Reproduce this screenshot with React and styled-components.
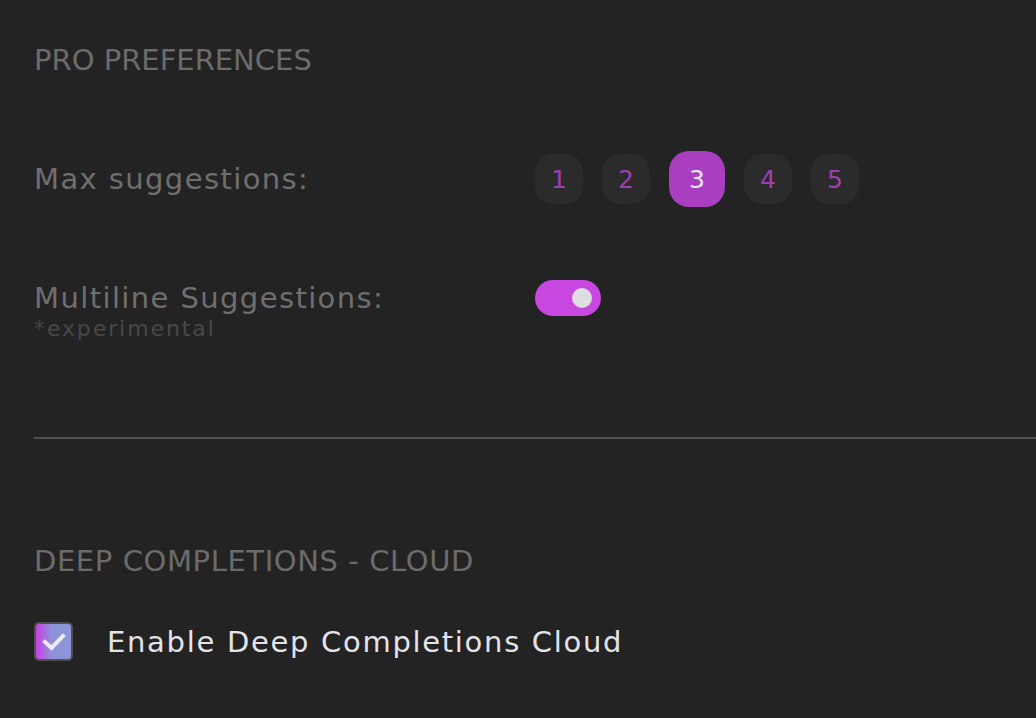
import React, { useState } from "react";
import styled, { createGlobalStyle } from "styled-components";

const FONT = `"DejaVu Sans", "Open Sans", sans-serif`;

const GlobalStyle = createGlobalStyle`
  html, body {
    margin: 0;
    padding: 0;
    background: #232323;
  }
  #root {
    min-height: 100vh;
    background: #232323;
  }
`;

const Page = styled.div`
  font-family: ${FONT};
  padding: 42px 0 0 34px;
  height: 718px;
  box-sizing: border-box;
  overflow: hidden;
`;

const SectionTitle = styled.h2`
  margin: 0;
  margin-top: ${(p) => p.$mt || 0}px;
  font-size: 29px;
  line-height: 36px;
  font-weight: 400;
  letter-spacing: ${(p) => p.$ls || 0}px;
  color: #6b6b6b;
  text-transform: uppercase;
`;

const Row = styled.div`
  display: grid;
  grid-template-columns: 501px auto;
  align-items: ${(p) => p.$align || "center"};
  margin-top: ${(p) => p.$mt}px;
`;

const Label = styled.div`
  font-size: 29px;
  line-height: 36px;
  letter-spacing: 1.4px;
  color: #6f6f6f;
`;

const Note = styled.div`
  font-size: 22px;
  line-height: 26px;
  letter-spacing: 1.9px;
  color: #484848;
`;

const Choices = styled.div`
  display: flex;
  align-items: center;
  gap: 19px;
`;

const Choice = styled.button`
  width: ${(p) => (p.$active ? 56 : 48)}px;
  height: ${(p) => (p.$active ? 56 : 50)}px;
  border: none;
  border-radius: ${(p) => (p.$active ? 20 : 18)}px;
  padding: 0;
  background: ${(p) => (p.$active ? "#a93fc0" : "#2b2b2b")};
  color: ${(p) => (p.$active ? "#e6e6e6" : "#9c3fb2")};
  font-family: ${FONT};
  font-size: 25px;
  cursor: pointer;
`;

const Toggle = styled.button`
  width: 66px;
  height: 36px;
  border: none;
  border-radius: 18px;
  background: #c847e0;
  position: relative;
  padding: 0;
  cursor: pointer;
`;

const Knob = styled.span`
  position: absolute;
  top: 8px;
  left: ${(p) => (p.$on ? 37 : 9)}px;
  width: 20px;
  height: 20px;
  border-radius: 50%;
  background: #dedde0;
`;

const Divider = styled.hr`
  margin: 0;
  margin-top: ${(p) => p.$mt}px;
  border: none;
  height: 2px;
  background: #515151;
`;

const CheckRow = styled.label`
  display: flex;
  align-items: center;
  gap: 34px;
  margin-top: 43px;
  cursor: pointer;
`;

const Box = styled.span`
  width: 39px;
  height: 39px;
  box-sizing: border-box;
  border: 2px solid #4f4f4f;
  border-radius: 5px;
  background: linear-gradient(90deg, #c83fe6 0%, #8e93d8 45%, #8b95d9 100%);
  display: flex;
  align-items: center;
  justify-content: center;
`;

const CheckText = styled.span`
  font-size: 29px;
  line-height: 36px;
  letter-spacing: 1.7px;
  color: #e4e3ea;
`;

export default function App() {
  const [max, setMax] = useState(3);
  const [multi, setMulti] = useState(true);

  return (
    <Page>
      <GlobalStyle />
      <SectionTitle>Pro Preferences</SectionTitle>

      <Row $mt={73}>
        <Label>Max suggestions:</Label>
        <Choices>
          {[1, 2, 3, 4, 5].map((n) => (
            <Choice key={n} $active={n === max} onClick={() => setMax(n)}>
              {n}
            </Choice>
          ))}
        </Choices>
      </Row>

      <Row $mt={73} $align="start">
        <div>
          <Label>Multiline Suggestions:</Label>
          <Note>*experimental</Note>
        </div>
        <Toggle onClick={() => setMulti(!multi)}>
          <Knob $on={multi} />
        </Toggle>
      </Row>

      <Divider $mt={95} />

      <SectionTitle $mt={104} $ls={0.6}>Deep Completions - Cloud</SectionTitle>

      <CheckRow>
        <Box>
          <svg width="24" height="20" viewBox="0 0 24 20">
            <path d="M3 10 L9.5 16 L21 4" fill="none" stroke="#ecebf2" strokeWidth="4" strokeLinecap="square" />
          </svg>
        </Box>
        <CheckText>Enable Deep Completions Cloud</CheckText>
      </CheckRow>
    </Page>
  );
}
